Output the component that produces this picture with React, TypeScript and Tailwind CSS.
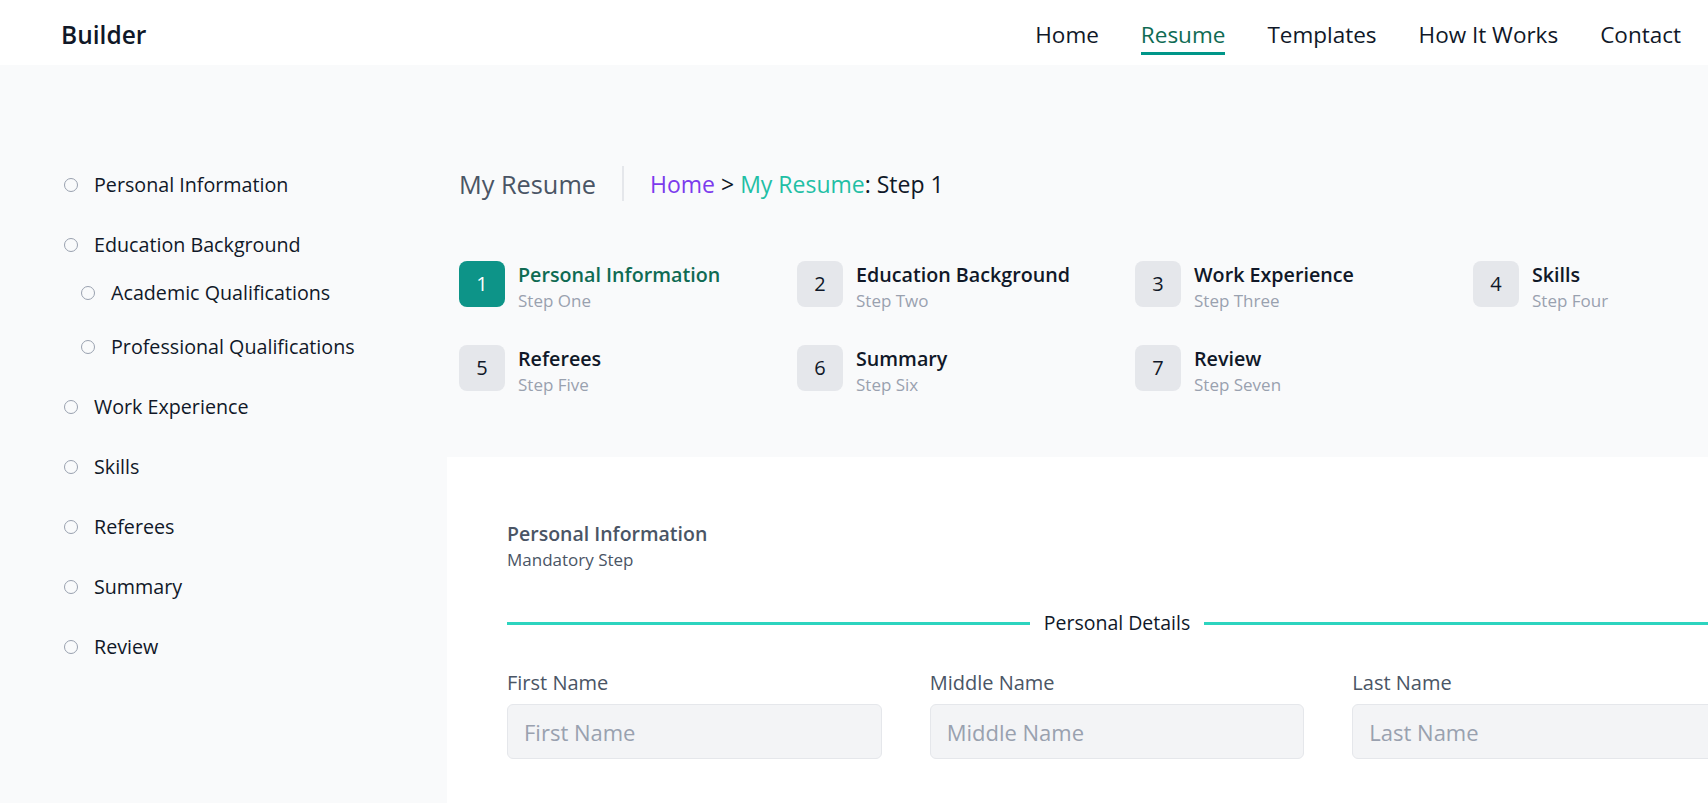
const navLinks = ["Home", "Resume", "Templates", "How It Works", "Contact"];

const steps = [
  { n: 1, title: "Personal Information", sub: "Step One" },
  { n: 2, title: "Education Background", sub: "Step Two" },
  { n: 3, title: "Work Experience", sub: "Step Three" },
  { n: 4, title: "Skills", sub: "Step Four" },
  { n: 5, title: "Referees", sub: "Step Five" },
  { n: 6, title: "Summary", sub: "Step Six" },
  { n: 7, title: "Review", sub: "Step Seven" },
];

function Dot() {
  return <span className="w-[14px] h-[14px] rounded-full border border-gray-400 shrink-0" />;
}

function SideItem({ label }: { label: string }) {
  return (
    <div className="flex items-center gap-4 h-[28px]">
      <Dot />
      <span className="text-[19.7px] leading-[28px] text-gray-900">{label}</span>
    </div>
  );
}

function Field({ label }: { label: string }) {
  return (
    <div className="flex flex-col">
      <label className="text-[20px] leading-[28px] text-gray-600">{label}</label>
      <input
        placeholder={label}
        className="mt-[7px] h-[55px] px-4 bg-gray-100 border border-gray-200 rounded-md text-[22px] text-gray-700 placeholder:text-gray-400 outline-none"
      />
    </div>
  );
}

export default function App() {
  return (
    <div className="h-screen w-full overflow-hidden bg-gray-50 font-['Open_Sans',sans-serif]">
      <header className="h-[65px] bg-white flex justify-between">
        <div className="pl-[61px] pt-[20px] text-[24.5px] leading-[30px] font-semibold text-gray-900">Builder</div>
        <nav className="flex gap-[42px] pt-[20px] pr-[27px]">
          {navLinks.map((l) => (
            <a
              key={l}
              href="#"
              className={
                l === "Resume"
                  ? "h-fit text-[22.5px] leading-[30px] pb-[2px] border-b-[3px] border-teal-600 text-[#0f6b53]"
                  : "h-fit text-[22.5px] leading-[30px] pb-[2px] border-b-[3px] border-transparent text-gray-900"
              }
            >
              {l}
            </a>
          ))}
        </nav>
      </header>

      <div className="flex">
        <aside className="w-[447px] shrink-0 pl-[64px] pt-[106px]">
          <div className="flex flex-col gap-[32px]">
            <SideItem label="Personal Information" />
            <div>
              <SideItem label="Education Background" />
              <div className="mt-[20px] pl-[17px] flex flex-col gap-[26px]">
                <SideItem label="Academic Qualifications" />
                <SideItem label="Professional Qualifications" />
              </div>
            </div>
            <SideItem label="Work Experience" />
            <SideItem label="Skills" />
            <SideItem label="Referees" />
            <SideItem label="Summary" />
            <SideItem label="Review" />
          </div>
        </aside>

        <main className="w-[1340px] shrink-0 pt-[101px]">
          <div className="pl-[12px] flex items-center h-[35px]">
            <h1 className="text-[25.3px] leading-[34px] text-gray-600">My Resume</h1>
            <div className="ml-[26px] mr-[26px] w-[2px] h-[35px] bg-gray-200" />
            <p className="text-[23px] leading-[30px] text-gray-900">
              <span className="text-[#7c3aed]">Home</span> &gt;{" "}
              <span className="text-[#1fbfa5]">My Resume</span>: Step 1
            </p>
          </div>

          <div className="pl-[12px] mt-[60px] grid grid-cols-[repeat(4,338px)] gap-y-[32px]">
            {steps.map((s) => {
              const active = s.n === 1;
              return (
                <div key={s.n} className="flex">
                  <div
                    className={
                      active
                        ? "w-[46px] h-[46px] rounded-lg bg-[#0d9488] text-white flex items-center justify-center text-[20px] font-medium"
                        : "w-[46px] h-[46px] rounded-lg bg-gray-200 text-gray-900 flex items-center justify-center text-[20px] font-medium"
                    }
                  >
                    {s.n}
                  </div>
                  <div className="ml-[13px]">
                    <div
                      className={
                        active
                          ? "text-[19.7px] leading-[28px] font-semibold text-[#0f6b53]"
                          : "text-[19.7px] leading-[28px] font-semibold text-gray-900"
                      }
                    >
                      {s.title}
                    </div>
                    <div className="text-[17px] leading-[24px] text-gray-400">{s.sub}</div>
                  </div>
                </div>
              );
            })}
          </div>

          <section className="mt-[60px] bg-white px-[60px] pt-[63px] pb-[60px] min-h-[400px]">
            <h2 className="text-[19.5px] leading-[28px] font-semibold text-gray-600">Personal Information</h2>
            <p className="text-[17px] leading-[24px] text-gray-600">Mandatory Step</p>

            <div className="mt-[37px] flex items-center gap-[14px]">
              <div className="flex-1 h-[3px] bg-[#2dd4bf]" />
              <span className="text-[19.5px] leading-[28px] text-gray-900">Personal Details</span>
              <div className="flex-1 h-[3px] bg-[#2dd4bf]" />
            </div>

            <div className="mt-[32px] grid grid-cols-3 gap-[48px]">
              <Field label="First Name" />
              <Field label="Middle Name" />
              <Field label="Last Name" />
            </div>
          </section>
        </main>
      </div>
    </div>
  );
}
